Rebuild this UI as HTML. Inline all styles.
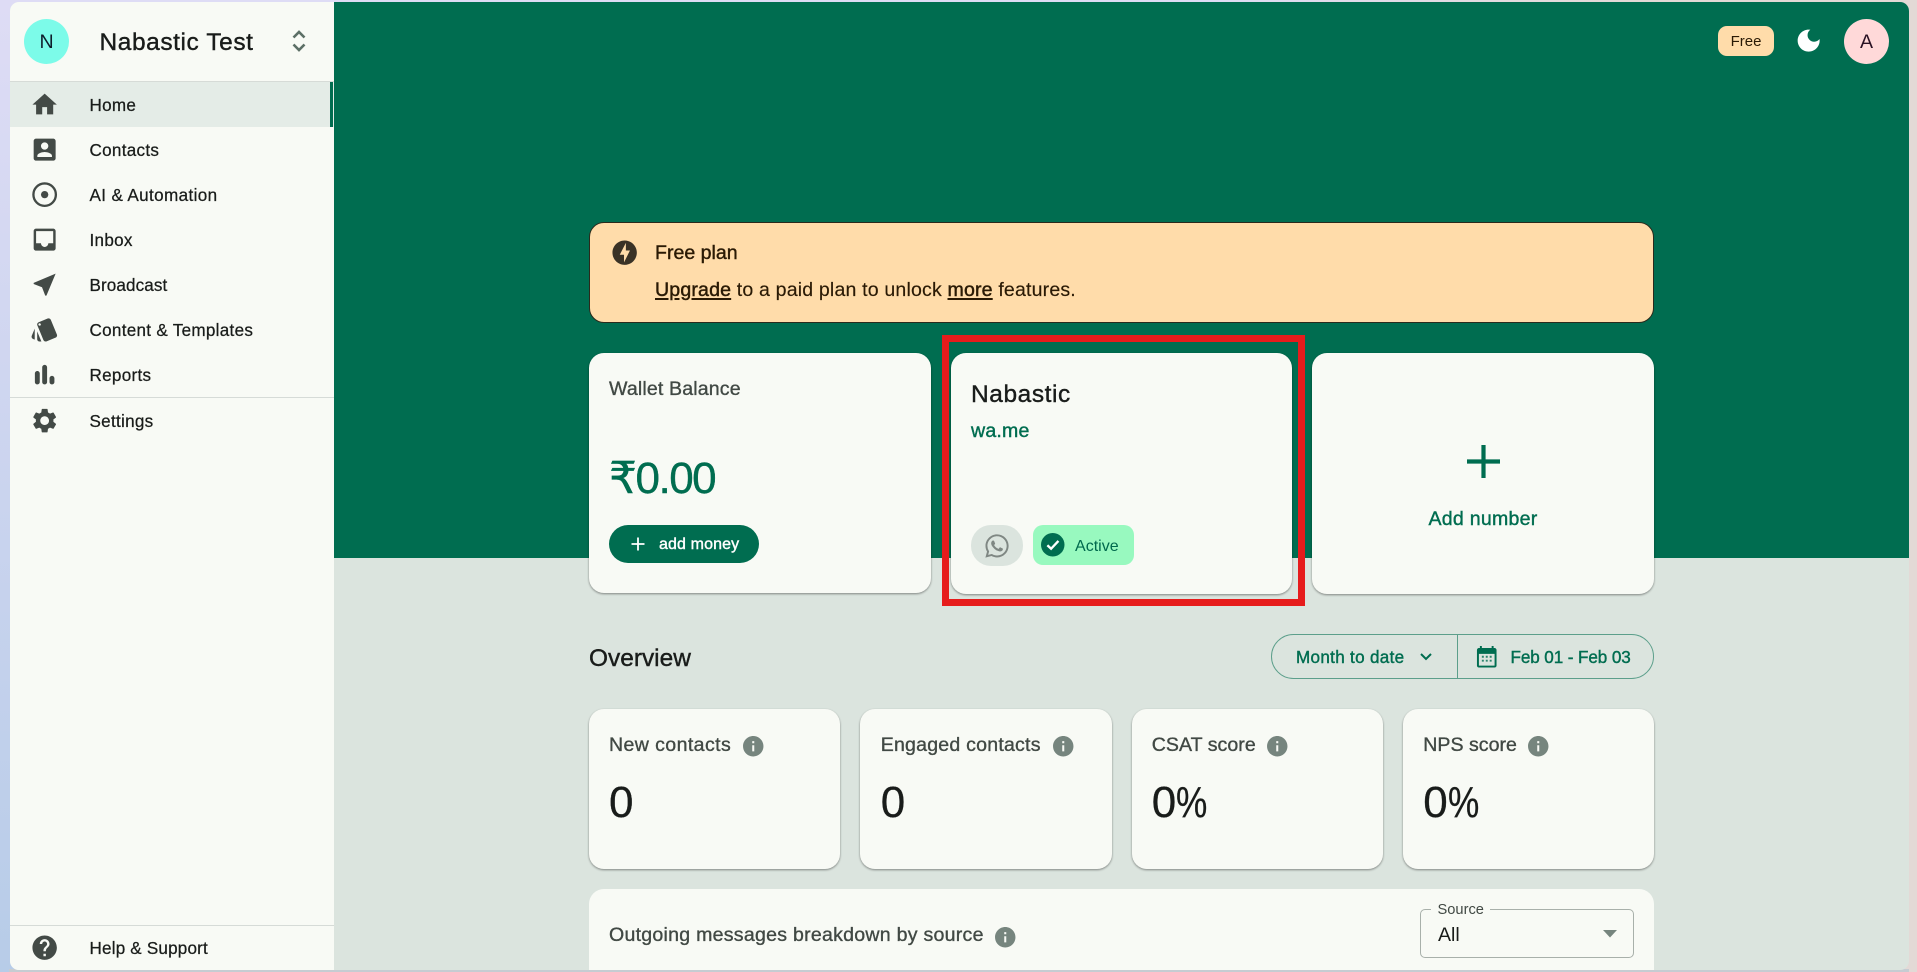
<!DOCTYPE html>
<html lang="en">
<head>
<meta charset="utf-8">
<title>Nabastic Test - Home</title>
<style>
*{box-sizing:border-box}
html,body{margin:0;padding:0;width:1917px;height:972px;overflow:hidden}
body{position:relative;font-family:"Liberation Sans",sans-serif;color:#191c1a;
background:linear-gradient(180deg,#dedcf5 0%,#b7cce8 100%)}
.right{position:absolute;left:1200px;top:0;width:717px;height:972px;background:linear-gradient(90deg,#dedcf5 0%,#e3d9d6 60%)}
.bot{position:absolute;left:9px;top:969px;width:1900px;height:3px;background:#c6ccd2}
.win{position:absolute;left:9.5px;top:2px;width:1899.5px;height:968px;border-radius:9px;overflow:hidden;background:#dbe4de}
.side{position:absolute;left:0;top:0;width:324px;height:968px;background:#f8faf5}
.band{position:absolute;left:324px;top:0;right:0;height:556px;background:#006d50}
.abs{position:absolute}
.t{position:absolute;white-space:nowrap;height:40px;line-height:40px;margin-top:-19px}
.m{-webkit-text-stroke:.4px currentColor}
.card{position:absolute;background:#f8faf5;border-radius:15px;box-shadow:0 1px 2px rgba(0,0,0,.42)}
.nav{font-size:17.1px;letter-spacing:.28px;left:89.5px;color:#191c1a;-webkit-text-stroke:.25px currentColor}
.ic{position:absolute;width:29.3px;height:29.3px;left:29.7px;fill:#434a46}
.hr{position:absolute;left:9.5px;width:324px;height:1px;background:#d6dbd7}
.info{position:absolute;width:24.5px;height:24.5px;fill:#76857e}
.st{font-size:19.56px;color:#414944;-webkit-text-stroke:.35px currentColor}
.val{font-size:44px;color:#191c1a;-webkit-text-stroke:.3px currentColor}
.val span{display:inline-block;transform:scaleX(.8);transform-origin:left center}
.g{color:#006d50}
u{text-underline-offset:2px;text-decoration-thickness:1.5px;-webkit-text-stroke:.45px currentColor}
</style>
</head>
<body>
<div class="right"></div>
<div class="bot"></div>
<div class="win">
  <div class="side"></div>
  <div class="band"></div>
</div>

<!-- sidebar header -->
<div class="abs" style="left:24px;top:19px;width:45px;height:45px;border-radius:50%;background:#7cfbe9"></div>
<div class="t" style="left:24px;top:41px;width:45px;text-align:center;font-size:19.56px;color:#0e1d2b">N</div>
<div class="t m" style="left:99.5px;top:42px;font-size:24.45px;letter-spacing:.6px;color:#191c1a">Nabastic Test</div>
<svg class="abs" style="left:290px;top:28px" width="18" height="26" viewBox="0 0 18 26" fill="none" stroke="#5c6f66" stroke-width="2.6"><path d="M3.5 9.5 9 4l5.5 5.5"/><path d="M3.5 16.5 9 22l5.5-5.500"/></svg>
<div class="hr" style="top:81px"></div>

<!-- nav -->
<div class="abs" style="left:9.5px;top:82px;width:324px;height:45px;background:#e4ece7"></div>
<div class="abs" style="left:330px;top:82px;width:3px;height:45px;background:#006d50"></div>

<svg class="ic" style="top:90.3px" viewBox="0 0 24 24"><path d="M10 20v-6h4v6h5v-8h3L12 3 2 12h3v8z"/></svg>
<div class="t nav" style="top:105px">Home</div>

<svg class="ic" style="top:135.3px" viewBox="0 0 24 24"><path d="M3 5v14c0 1.100.89 2 2 2h14c1.100 0 2-.9 2-2V5c0-1.100-.9-2-2-2H5c-1.110 0-2 .9-2 2zm12 4c0 1.660-1.340 3-3 3s-3-1.340-3-3 1.340-3 3-3 3 1.340 3 3zm-9 8c0-2 4-3.100 6-3.100s6 1.100 6 3.100v1H6v-1z"/></svg>
<div class="t nav" style="top:150px">Contacts</div>

<svg class="ic" style="top:180.3px" viewBox="0 0 24 24"><circle cx="12" cy="12" r="9.200" fill="none" stroke="#434a46" stroke-width="1.900"/><circle cx="12" cy="12" r="3"/></svg>
<div class="t nav" style="top:195px;letter-spacing:.36px">AI &amp; Automation</div>

<svg class="ic" style="top:225.3px" viewBox="0 0 24 24"><path d="M19 3H5c-1.100 0-2 .9-2 2v14c0 1.100.9 2 2 2h14c1.100 0 2-.9 2-2V5c0-1.100-.9-2-2-2zm0 12h-4c0 1.660-1.350 3-3 3s-3-1.340-3-3H4.990V5H19v10z"/></svg>
<div class="t nav" style="top:240px">Inbox</div>

<svg class="ic" style="top:270.3px" viewBox="0 0 24 24"><path d="M21 3 3 10.530v.98l6.840 2.650L12.480 21h.98L21 3z"/></svg>
<div class="t nav" style="top:285px;letter-spacing:.1px">Broadcast</div>

<svg class="ic" style="top:315.3px" viewBox="0 0 24 24"><path d="M2.530 19.650l1.340.56v-9.030l-2.430 5.860c-.41 1.020.08 2.190 1.090 2.610zm19.500-3.700L17.070 3.980c-.31-.75-1.040-1.210-1.810-1.230-.26 0-.53.04-.79.15L7.100 5.950c-.75.31-1.210 1.030-1.230 1.800-.01.27.04.54.15.8l4.960 11.970c.31.76 1.050 1.220 1.830 1.230.26 0 .52-.05.77-.15l7.360-3.050c1.020-.42 1.510-1.590 1.090-2.600zM7.880 8.750c-.55 0-1-.45-1-1s.45-1 1-1 1 .45 1 1-.45 1-1 1zm-2 11c0 1.100.9 2 2 2h1.450l-3.450-8.340v6.340z"/></svg>
<div class="t nav" style="top:330px">Content &amp; Templates</div>

<svg class="ic" style="top:360.3px" viewBox="0 0 24 24"><path d="M12 4c-1.100 0-2 .9-2 2v12c0 1.100.9 2 2 2s2-.9 2-2V6c0-1.100-.9-2-2-2zM6 9c-1.100 0-2 .9-2 2v7c0 1.100.9 2 2 2s2-.9 2-2v-7c0-1.100-.9-2-2-2zM18 13c-1.100 0-2 .9-2 2v3c0 1.100.9 2 2 2s2-.9 2-2v-3c0-1.100-.9-2-2-2z"/></svg>
<div class="t nav" style="top:375px">Reports</div>

<div class="hr" style="top:397px"></div>

<svg class="ic" style="top:406.3px" viewBox="0 0 24 24"><path d="M19.140 12.940c.04-.3.06-.61.06-.94 0-.32-.02-.64-.07-.94l2.030-1.580c.18-.14.23-.41.12-.61l-1.920-3.320c-.12-.22-.37-.29-.59-.22l-2.390.96c-.5-.38-1.030-.7-1.620-.94l-.36-2.540c-.04-.24-.24-.41-.48-.41h-3.840c-.24 0-.43.17-.47.41l-.36 2.540c-.59.24-1.130.57-1.620.94l-2.390-.96c-.22-.08-.47 0-.59.22L2.740 8.870c-.12.21-.08.47.12.61l2.030 1.580c-.05.3-.09.63-.09.94s.02.64.07.94l-2.030 1.580c-.18.14-.23.41-.12.61l1.920 3.320c.12.22.37.29.59.22l2.390-.96c.5.38 1.030.7 1.620.94l.36 2.540c.05.24.24.41.48.41h3.840c.24 0 .44-.17.47-.41l.36-2.540c.59-.24 1.130-.56 1.620-.94l2.390.96c.22.08.47 0 .59-.22l1.920-3.320c.12-.22.07-.47-.12-.61l-2.010-1.580zM12 15.600c-1.980 0-3.600-1.620-3.600-3.600s1.620-3.600 3.600-3.600 3.600 1.620 3.600 3.600-1.620 3.600-3.600 3.600z"/></svg>
<div class="t nav" style="top:421px">Settings</div>

<div class="hr" style="top:925px"></div>
<svg class="ic" style="top:933.3px" viewBox="0 0 24 24"><path d="M12 2C6.480 2 2 6.480 2 12s4.480 10 10 10 10-4.480 10-10S17.520 2 12 2zm1 17h-2v-2h2v2zm2.070-7.750l-.9.92C13.450 12.900 13 13.500 13 15h-2v-.5c0-1.100.45-2.100 1.170-2.830l1.240-1.260c.37-.36.59-.86.59-1.410 0-1.100-.9-2-2-2s-2 .9-2 2H8c0-2.210 1.790-4 4-4s4 1.790 4 4c0 .88-.36 1.680-.93 2.250z"/></svg>
<div class="t nav" style="top:948px;letter-spacing:.18px">Help &amp; Support</div>

<!-- top right -->
<div class="abs" style="left:1718px;top:26px;width:56px;height:30px;border-radius:9px;background:#ffdcaa"></div>
<div class="t" style="left:1718px;top:41px;width:56px;text-align:center;font-size:15px;color:#2a1a05">Free</div>
<svg class="abs" style="left:1794.4px;top:26.4px" width="29.3" height="29.3" viewBox="0 0 24 24" fill="#fff"><path d="M12 3c-4.970 0-9 4.030-9 9s4.030 9 9 9 9-4.030 9-9c0-.46-.04-.92-.1-1.360-.98 1.370-2.580 2.260-4.400 2.260-2.980 0-5.400-2.420-5.400-5.400 0-1.810.89-3.420 2.260-4.400-.44-.06-.9-.1-1.360-.1z"/></svg>
<div class="abs" style="left:1844px;top:19px;width:45px;height:45px;border-radius:50%;background:#ffd9d9"></div>
<div class="t" style="left:1844px;top:41px;width:45px;text-align:center;font-size:19.56px;color:#2a1224">A</div>

<!-- banner -->
<div class="abs" style="left:589px;top:222px;width:1065px;height:100.5px;border-radius:15px;background:#ffdcaa;border:1px solid #2a2a1c"></div>
<svg class="abs" style="left:610.3px;top:238.3px" width="29.3" height="29.3" viewBox="0 0 24 24" fill="#3a3226"><path d="M12 2.020c-5.510 0-9.980 4.470-9.980 9.980s4.470 9.980 9.980 9.980 9.980-4.470 9.980-9.980S17.510 2.020 12 2.020zM11.480 20v-6.260H8L13 4v6.260h3.350L11.480 20z"/></svg>
<div class="t m" style="left:655px;top:252px;font-size:19.56px;color:#2a1a05">Free plan</div>
<div class="t" style="left:655px;top:288.5px;font-size:19.56px;letter-spacing:.17px;color:#2a1a05;-webkit-text-stroke:.15px currentColor"><u>Upgrade</u> to a paid plan to unlock <u>more</u> features.</div>

<!-- wallet card -->
<div class="card" style="left:589px;top:353px;width:342px;height:240px"></div>
<div class="t st" style="left:609px;top:388px;letter-spacing:.15px">Wallet Balance</div>
<div class="t g m" style="left:609px;top:478px;font-size:44px;letter-spacing:-1.5px">₹0.00</div>
<div class="abs" style="left:609px;top:525px;width:150px;height:38px;border-radius:19px;background:#006d50"></div>
<svg class="abs" style="left:630px;top:536px" width="16" height="16" viewBox="0 0 16 16" stroke="#fff" stroke-width="1.8" fill="none"><path d="M8 1.500v13M1.500 8h13"/></svg>
<div class="t m" style="left:659px;top:544px;font-size:16px;letter-spacing:.12px;color:#fff">add money</div>

<!-- nabastic card -->
<div class="card" style="left:951px;top:353px;width:341px;height:241px"></div>
<div class="t m" style="left:971px;top:393.5px;font-size:24.45px;letter-spacing:.6px">Nabastic</div>
<div class="t g m" style="left:971px;top:430px;font-size:19.56px;letter-spacing:.2px">wa.me</div>
<div class="abs" style="left:971px;top:525px;width:52px;height:41px;border-radius:20px;background:#dbe4de"></div>
<svg class="abs" style="left:983px;top:531.5px" width="28" height="28" viewBox="0 0 24 24" fill="#7f8783"><path d="M12.040 2C6.580 2 2.130 6.450 2.130 11.910c0 1.750.46 3.450 1.320 4.950L2.050 22l5.250-1.380c1.450.79 3.080 1.210 4.740 1.210 5.460 0 9.910-4.450 9.910-9.910 0-2.650-1.030-5.140-2.900-7.010A9.816 9.816 0 0 0 12.040 2m.01 1.670c2.200 0 4.260.86 5.820 2.420a8.225 8.225 0 0 1 2.410 5.830c0 4.540-3.700 8.230-8.240 8.230-1.480 0-2.930-.39-4.190-1.150l-.3-.17-3.120.82.83-3.040-.2-.32a8.188 8.188 0 0 1-1.260-4.380c.01-4.540 3.700-8.240 8.250-8.240M8.530 7.330c-.16 0-.43.06-.66.31-.22.25-.87.86-.87 2.070 0 1.220.89 2.390 1 2.560.14.17 1.760 2.670 4.250 3.730.59.27 1.050.42 1.410.53.59.19 1.130.16 1.560.1.48-.07 1.460-.6 1.670-1.180.21-.58.21-1.070.15-1.180-.07-.1-.23-.16-.48-.27-.25-.14-1.470-.74-1.690-.82-.23-.08-.37-.12-.56.12-.16.25-.64.81-.78.97-.15.17-.29.19-.53.07-.26-.13-1.060-.39-2-1.230-.74-.66-1.230-1.470-1.380-1.720-.12-.24-.01-.39.11-.5.11-.11.27-.29.37-.44.13-.14.17-.25.25-.41.08-.17.04-.31-.02-.43-.06-.11-.56-1.350-.77-1.840-.2-.48-.4-.42-.56-.43-.14 0-.3-.01-.47-.01z"/></svg>
<div class="abs" style="left:1033px;top:525px;width:101px;height:40px;border-radius:10px;background:#98f9bf"></div>
<svg class="abs" style="left:1041px;top:533px" width="23.5" height="23.5" viewBox="0 0 24 24"><circle cx="12" cy="12" r="12" fill="#006d50"/><path d="M6.500 12.500l3.800 3.600 7.500-8" fill="none" stroke="#fff" stroke-width="2.400"/></svg>
<div class="t" style="left:1075px;top:545.5px;font-size:16px;letter-spacing:.02px;color:#00694d">Active</div>

<!-- add number card -->
<div class="card" style="left:1312px;top:353px;width:342px;height:241px"></div>
<svg class="abs" style="left:1466.5px;top:444.5px" width="33" height="33" viewBox="0 0 33 33" stroke="#006d50" stroke-width="4.2" fill="none"><path d="M16.500 0v33M0 16.500h33"/></svg>
<div class="t g m" style="left:1312px;top:518px;width:342px;text-align:center;font-size:19.56px;letter-spacing:.25px">Add number</div>

<!-- red annotation -->
<div class="abs" style="left:942px;top:335px;width:363px;height:271px;border:7.5px solid #e61c1c"></div>

<!-- overview header -->
<div class="t m" style="left:589px;top:657.5px;font-size:24.45px;letter-spacing:0;color:#191c1a">Overview</div>
<div class="abs" style="left:1271px;top:634px;width:383px;height:45px;border:1.2px solid #5c9f8b;border-radius:23px"></div>
<div class="abs" style="left:1457px;top:634px;width:1.2px;height:45px;background:#5c9f8b"></div>
<div class="t g m" style="left:1296px;top:656.5px;font-size:17.1px;letter-spacing:.3px">Month to date</div>
<svg class="abs" style="left:1419px;top:652px" width="14" height="10" viewBox="0 0 14 10" fill="none" stroke="#006d50" stroke-width="2"><path d="M2 2l5 5 5-5"/></svg>
<svg class="abs" style="left:1475.3px;top:645.3px" width="23.5" height="23.5" viewBox="0 0 24 24" fill="#006d50"><path fill-rule="evenodd" d="M20 3h-1V1h-2v2H7V1H5v2H4c-1.100 0-2 .9-2 2v16c0 1.100.9 2 2 2h16c1.100 0 2-.9 2-2V5c0-1.100-.9-2-2-2zm0 18H4V9h16v12z"/><path d="M7 11h2v2H7zm4 0h2v2h-2zm4 0h2v2h-2zM7 15h2v2H7zm4 0h2v2h-2zm4 0h2v2h-2z" opacity=".8"/></svg>
<div class="t g m" style="left:1510.5px;top:656.5px;font-size:17.1px;letter-spacing:-.1px">Feb 01 - Feb 03</div>

<!-- stat cards -->
<div class="card" style="left:589px;top:709px;width:251px;height:160px"></div>
<div class="t st" style="left:609px;top:744px;letter-spacing:.4px">New contacts</div>
<svg class="info" style="left:741px;top:733.7px" viewBox="0 0 24 24"><path d="M12 2C6.480 2 2 6.480 2 12s4.480 10 10 10 10-4.480 10-10S17.520 2 12 2zm1 15h-2v-6h2v6zm0-8h-2V7h2v2z"/></svg>
<div class="t val" style="left:609px;top:802px">0</div>

<div class="card" style="left:860px;top:709px;width:251.5px;height:160px"></div>
<div class="t st" style="left:880.7px;top:744px;letter-spacing:.22px">Engaged contacts</div>
<svg class="info" style="left:1051px;top:733.7px" viewBox="0 0 24 24"><path d="M12 2C6.480 2 2 6.480 2 12s4.480 10 10 10 10-4.480 10-10S17.520 2 12 2zm1 15h-2v-6h2v6zm0-8h-2V7h2v2z"/></svg>
<div class="t val" style="left:880.7px;top:802px">0</div>

<div class="card" style="left:1132px;top:709px;width:251px;height:160px"></div>
<div class="t st" style="left:1151.7px;top:744px;letter-spacing:.05px">CSAT score</div>
<svg class="info" style="left:1265.3px;top:733.7px" viewBox="0 0 24 24"><path d="M12 2C6.480 2 2 6.480 2 12s4.480 10 10 10 10-4.480 10-10S17.520 2 12 2zm1 15h-2v-6h2v6zm0-8h-2V7h2v2z"/></svg>
<div class="t val" style="left:1151.7px;top:802px">0<span>%</span></div>

<div class="card" style="left:1403px;top:709px;width:251px;height:160px"></div>
<div class="t st" style="left:1423.3px;top:744px;letter-spacing:.02px">NPS score</div>
<svg class="info" style="left:1526.3px;top:733.7px" viewBox="0 0 24 24"><path d="M12 2C6.480 2 2 6.480 2 12s4.480 10 10 10 10-4.480 10-10S17.520 2 12 2zm1 15h-2v-6h2v6zm0-8h-2V7h2v2z"/></svg>
<div class="t val" style="left:1423.3px;top:802px">0<span>%</span></div>

<!-- breakdown card -->
<div class="abs" style="left:589px;top:889px;width:1065px;height:81px;background:#f8faf5;border-radius:15px 15px 0 0"></div>
<div class="t st" style="left:609px;top:934px;letter-spacing:.26px">Outgoing messages breakdown by source</div>
<svg class="info" style="left:993.3px;top:924.5px" viewBox="0 0 24 24"><path d="M12 2C6.480 2 2 6.480 2 12s4.480 10 10 10 10-4.480 10-10S17.520 2 12 2zm1 15h-2v-6h2v6zm0-8h-2V7h2v2z"/></svg>
<div class="abs" style="left:1420px;top:909px;width:214px;height:49px;border:1.2px solid #a8b0aa;border-radius:5px"></div>
<div class="abs" style="left:1431px;top:906px;width:59px;height:6px;background:#f8faf5"></div>
<div class="t" style="left:1437.5px;top:909px;font-size:14.67px;color:#414944">Source</div>
<div class="t" style="left:1438px;top:934px;font-size:19.56px;color:#191c1a">All</div>
<svg class="abs" style="left:1603px;top:930px" width="14" height="8" viewBox="0 0 14 8" fill="#76857e"><path d="M0 0h14L7 7.500z"/></svg>
</body>
</html>
